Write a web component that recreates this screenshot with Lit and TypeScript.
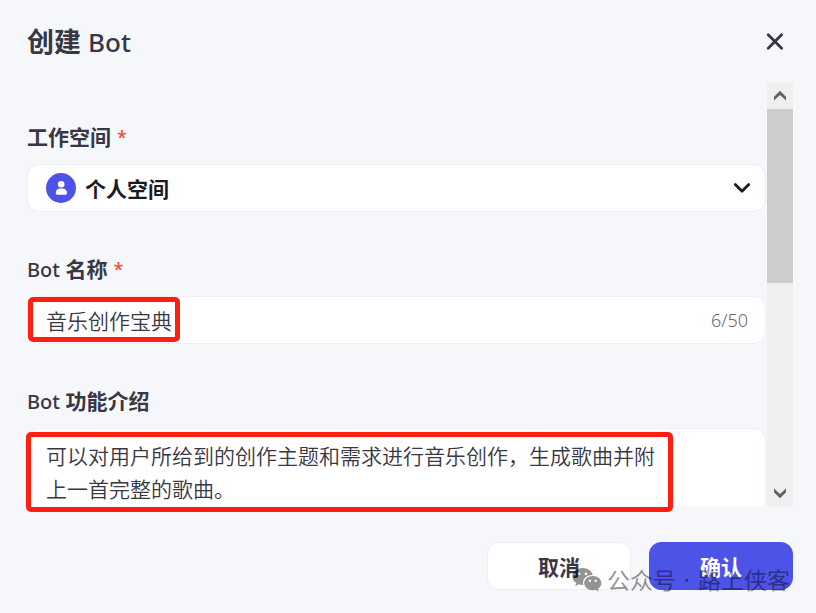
import { LitElement, html, css } from "lit";
import { customElement, state } from "lit/decorators.js";

@customElement("app-root")
export class AppRoot extends LitElement {
  @state() private name = "音乐创作宝典";
  @state() private intro =
    "可以对用户所给到的创作主题和需求进行音乐创作，生成歌曲并附上一首完整的歌曲。";

  static styles = css`
    :host {
      display: block;
      font-family: "Noto Sans", "Noto Sans CJK SC", sans-serif;
      font-size: 21px;
      line-height: 32px;
      color: #383743;
    }
    * {
      box-sizing: border-box;
    }
    button,
    input,
    select,
    textarea {
      font: inherit;
      color: inherit;
      margin: 0;
      outline: none;
    }
    button {
      cursor: pointer;
    }
    svg {
      display: block;
    }
    .dialog {
      position: relative;
      display: flex;
      flex-direction: column;
      height: 100vh;
      background: #f6f7fb;
    }
    .header {
      flex: none;
      display: flex;
      align-items: center;
      justify-content: space-between;
      height: 83px;
      padding: 0 24px 0 27px;
    }
    .title {
      margin: 0;
      font-size: 27px;
      font-weight: 700;
    }
    .latin {
      font-weight: 500;
    }
    .title .latin {
      font-size: 26px;
    }
    .label .latin {
      font-size: 20px;
    }
    .close {
      width: 34px;
      height: 34px;
      padding: 8px;
      border: 0;
      background: none;
    }
    .body {
      position: relative;
      flex: 1;
      min-height: 0;
      display: flex;
      margin: 0 23px 0 27px;
    }
    .form {
      flex: 1;
      min-width: 0;
      overflow: hidden;
      padding: 39px 1px 0 0;
    }
    .field {
      margin-bottom: 42px;
    }
    .label {
      display: flex;
      gap: 6px;
      height: 32px;
      margin-bottom: 10px;
      font-weight: 700;
      line-height: 30px;
      white-space: pre;
    }
    .star {
      color: #f54a2c;
      font-size: 18px;
      font-weight: 500;
    }
    .box {
      position: relative;
      display: flex;
      align-items: center;
      height: 48px;
      background: #fff;
      border: 1px solid #edeef2;
      border-radius: 12px;
    }
    .avatar,
    .arrow {
      position: absolute;
      pointer-events: none;
    }
    .avatar {
      left: 18px;
    }
    .arrow {
      right: 14px;
    }
    .select {
      appearance: none;
      width: 100%;
      height: 46px;
      padding: 2px 48px 0 57px;
      border: 0;
      background: none;
      font-weight: 700;
      color: #1c1b22;
    }
    .input {
      flex: 1;
      min-width: 0;
      height: 46px;
      padding: 0 18px;
      border: 0;
      background: none;
      font-weight: 350;
    }
    .count {
      padding-right: 17px;
      font-size: 18px;
      font-weight: 350;
      color: #6b6b72;
    }
    .area {
      display: block;
      width: 100%;
      height: 150px;
      padding: 11px 96px 11px 18px;
      border: 1px solid #edeef2;
      border-radius: 12px;
      background: #fff;
      font-weight: 350;
      line-height: 33px;
      resize: none;
      overflow: hidden;
    }
    .scroll {
      flex: none;
      display: flex;
      flex-direction: column;
      width: 26px;
      background: #efefef;
    }
    .step {
      flex: none;
      height: 26px;
      padding: 0 6px;
      border: 0;
      background: none;
    }
    .track {
      flex: 1;
    }
    .thumb {
      height: 47%;
      background: #cdcdcd;
    }
    .mark {
      position: absolute;
      border: 5px solid #ff1e10;
      border-radius: 5px;
      pointer-events: none;
    }
    .mark-name {
      left: 1px;
      top: 214px;
      width: 152px;
      height: 45px;
    }
    .mark-intro {
      left: -1px;
      top: 349px;
      width: 647px;
      height: 80px;
    }
    .footer {
      flex: none;
      display: flex;
      justify-content: flex-end;
      gap: 18px;
      padding: 36px 23px 23px;
    }
    .btn {
      width: 144px;
      height: 48px;
      padding: 2px 0 0;
      border: 1px solid #edeef2;
      border-radius: 12px;
      background: #fff;
      font-weight: 700;
    }
    .primary {
      border-color: #4e53e8;
      background: #4e53e8;
      color: #fff;
    }
    .watermark {
      position: absolute;
      right: 26px;
      bottom: 17px;
      display: flex;
      align-items: center;
      gap: 5px;
      font-size: 23px;
      color: #000;
      opacity: 0.42;
      white-space: pre;
      pointer-events: none;
    }
    .dot {
      padding: 0 2px;
    }
  `;

  render() {
    return html`
      <div class="dialog" role="dialog" aria-labelledby="title">
        <header class="header">
          <h1 class="title" id="title">创建 <span class="latin">Bot</span></h1>
          <button class="close" aria-label="关闭">
            <svg width="18" height="18" viewBox="0 0 18 18" fill="none" stroke="#383743" stroke-width="2.8" stroke-linecap="round">
              <path d="M2.200 1.800 15.600 15.200M15.600 1.800 2.200 15.200" />
            </svg>
          </button>
        </header>

        <div class="body">
          <form class="form">
            <div class="field">
              <label class="label" for="space">工作空间<span class="star">*</span></label>
              <div class="box">
                <svg class="avatar" width="30" height="30" viewBox="0 0 30 30">
                  <circle cx="15" cy="15" r="15" fill="#4e53e8" />
                  <circle cx="15.200" cy="11.300" r="3.300" fill="#fff" />
                  <path d="M9.800 19.800C9.800 17 11.600 15.400 14 15.400h2.600c2.400 0 4.400 1.600 4.400 4.400 0 1.300-.5 2-1.400 2h-8.400c-.9 0-1.400-.7-1.400-2Z" fill="#fff" />
                </svg>
                <select class="select" id="space">
                  <option>个人空间</option>
                </select>
                <svg class="arrow" width="18" height="12" viewBox="0 0 18 12" fill="none" stroke="#1c1b22" stroke-width="2.800" stroke-linecap="round" stroke-linejoin="round">
                  <path d="M2.300 2.500 9 9.200l6.700-6.700" />
                </svg>
              </div>
            </div>

            <div class="field">
              <label class="label" for="name"><span><span class="latin">Bot</span> 名称</span><span class="star">*</span></label>
              <div class="box">
                <input class="input" id="name" maxlength="50" .value=${this.name}
                  @input=${(e: Event) => (this.name = (e.target as HTMLInputElement).value)} />
                <span class="count">${this.name.length}/50</span>
              </div>
            </div>

            <div class="field">
              <label class="label" for="intro"><span><span class="latin">Bot</span> 功能介绍</span></label>
              <textarea class="area" id="intro" .value=${this.intro}
                @input=${(e: Event) => (this.intro = (e.target as HTMLTextAreaElement).value)}></textarea>
            </div>
          </form>

          <div class="scroll">
            <button class="step" aria-label="向上滚动">
              <svg width="14" height="12" viewBox="0 0 14 12" fill="#636363">
                <path d="M7 .8 13 6.800v3.800L7 5 1 10.600V6.800Z" />
              </svg>
            </button>
            <div class="track"><div class="thumb"></div></div>
            <button class="step" aria-label="向下滚动">
              <svg width="14" height="12" viewBox="0 0 14 12" fill="#636363">
                <path d="M7 11.200 13 5.200V1.400L7 7 1 1.400v3.800Z" />
              </svg>
            </button>
          </div>

          <div class="mark mark-name"></div>
          <div class="mark mark-intro"></div>
        </div>

        <footer class="footer">
          <button class="btn">取消</button>
          <button class="btn primary">确认</button>
        </footer>

        <div class="watermark">
          <svg width="30" height="26" viewBox="0 0 30 26">
            <path fill-rule="evenodd" d="M10.500 1C4.900 1 .4 4.800.4 9.500c0 2.700 1.500 5 3.800 6.600l-1 3.100 3.600-1.900c1.300.4 2.500.6 3.900.6h.6c-.2-.7-.3-1.400-.3-2.100 0-4.400 4.200-7.900 9.300-7.900h.5C19.900 3.900 15.600 1 10.500 1ZM7 5.400a1.400 1.400 0 1 1 0 2.800 1.400 1.400 0 0 1 0-2.800Zm7 0a1.400 1.400 0 1 1 0 2.800 1.400 1.400 0 0 1 0-2.800Z" />
            <path fill-rule="evenodd" d="M20.800 8.900c-4.900 0-8.600 3.200-8.600 7.200s3.700 7.200 8.600 7.200c1.100 0 2.100-.2 3.100-.5l2.900 1.600-.8-2.600c2-1.300 3.400-3.300 3.400-5.700 0-4-3.900-7.200-8.600-7.200Zm-2.900 3.600a1.200 1.200 0 1 1 0 2.400 1.200 1.200 0 0 1 0-2.400Zm5.800 0a1.200 1.200 0 1 1 0 2.400 1.200 1.200 0 0 1 0-2.400Z" />
          </svg>
          <span>公众号<span class="dot"> · </span>路上侠客</span>
        </div>
      </div>
    `;
  }
}
